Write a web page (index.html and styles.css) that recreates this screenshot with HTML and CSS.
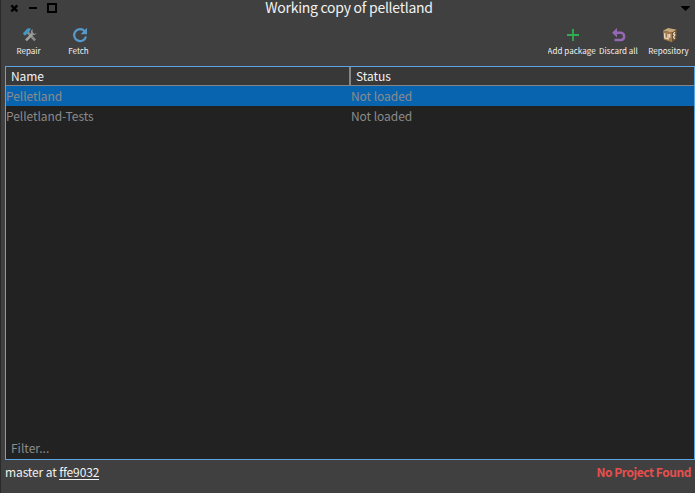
FILE: index.html
```html
<!DOCTYPE html>
<html lang="en">
<head>
<meta charset="utf-8">
<title>Working copy of pelletland</title>
<link rel="stylesheet" href="styles.css">
</head>
<body>
<div class="window">
  <header class="titlebar">
    <div class="controls">
      <svg width="9" height="9" viewBox="0 0 9 9"><path d="M1.3 1.3l6 6M7.3 1.3l-6 6" stroke="#000" stroke-width="2.4"/></svg>
      <svg width="8" height="9" viewBox="0 0 8 9"><path d="M0 4h8" stroke="#000" stroke-width="2"/></svg>
      <svg width="10" height="10" viewBox="0 0 10 10"><path d="M1 1h8v8H1z" fill="none" stroke="#000" stroke-width="2"/></svg>
    </div>
    <h1 class="title">Working copy of pelletland</h1>
    <svg class="menu" width="9" height="5" viewBox="0 0 9 5"><path d="M0 0h9v.8L4.5 5 0 .8z"/></svg>
  </header>
  <nav class="toolbar">
    <div class="group start">
      <button class="tool">
        <svg width="16" height="16" viewBox="0 0 16 16"><path d="M5.5 5.2l7.6 8.2" stroke="#8a8a8a" stroke-width="2.6"/><path d="M4 13.4l6.5-6.6" stroke="#a2a2a2" stroke-width="2.4"/><path d="M10.8 2.2a3 3 0 1 0 3.8 3.9l-2.2.9-1.9-1.9z" fill="#929292"/><path d="M.8 6.4L5.6 1.2l3.2.2-.8 2.4L3 8.8z" fill="#4298c5"/></svg>
        <span>Repair</span>
      </button>
      <button class="tool">
        <svg width="16" height="16" viewBox="0 0 16 16"><path d="M12.7 4.2A6 6 0 1 0 14 9.5" fill="none" stroke="#5599ca" stroke-width="2.2"/><path d="M15 .8v6.4H8.6z" fill="#5599ca"/></svg>
        <span>Fetch</span>
      </button>
    </div>
    <div class="group">
      <button class="tool wide">
        <svg width="16" height="16" viewBox="0 0 16 16"><path d="M8 2v12M2 8h12" stroke="#30ad50" stroke-width="1.8"/></svg>
        <span>Add package</span>
      </button>
      <button class="tool">
        <svg width="16" height="16" viewBox="0 0 16 16"><path d="M4 5.8h6.3a3.7 3.7 0 0 1 0 7.2H3.5" fill="none" stroke="#9468b2" stroke-width="2.5"/><path d="M1 5.8L6 1v9.6z" fill="#9468b2"/></svg>
        <span>Discard all</span>
      </button>
      <button class="tool repository">
        <svg width="16" height="16" viewBox="0 0 16 16"><path d="M1 3.7L6.2 1l8.5 1.8-4.6 2.6z" fill="#c8a77b"/><path d="M1 3.7l9.1 1.7v9.8L1.8 12.5z" fill="#a57849"/><path d="M10.1 5.4l4.6-2.6-.4 9.2-4.2 3.2z" fill="#775330"/><path d="M2.7 6.3v4.5l3.3 1V7M7.7 7v3.7" fill="none" stroke="#e5d9c9" stroke-width="1.4"/><path d="M12.8 5l-1.3 2 1.4 1-1.4 2 1.2 2" fill="none" stroke="#eee4d5" stroke-width="1.2"/></svg>
        <span>Repository</span>
      </button>
    </div>
  </nav>
  <main class="panel">
    <div class="row head"><div>Name</div><div>Status</div></div>
    <div class="row selected"><div>Pelletland</div><div>Not loaded</div></div>
    <div class="row"><div>Pelletland-Tests</div><div>Not loaded</div></div>
    <div class="filter">Filter...</div>
  </main>
  <footer class="status">
    <div class="commit">master at <span class="link">ffe9032</span></div>
    <div class="error">No Project Found</div>
  </footer>
</div>
</body>
</html>
```
FILE: styles.css
```css
* { box-sizing: border-box; }
body {
  margin: 0;
  background: #404040;
  font: 12px/20px "Noto Sans CJK SC", "Noto Sans", sans-serif;
  color: #f2f2f2;
  overflow: hidden;
}
.window {
  width: 695px;
  height: 493px;
  border-left: 1px solid #292929;
  display: flex;
  flex-direction: column;
}
.titlebar {
  height: 20px;
  display: grid;
  grid-template-columns: 60px 1fr 60px;
  align-items: start;
}
.controls { display: flex; gap: 10px; padding: 4px 0 0 9px; }
.controls svg { flex: none; }
.controls svg:last-child { margin-top: -1px; }
.title {
  margin: 0;
  padding-left: 2px;
  font-size: 14px;
  line-height: 15px;
  letter-spacing: -0.26px;
  font-weight: 400;
  text-align: center;
  white-space: nowrap;
}
.menu { justify-self: end; margin: 6px 5px 0 0; }
.toolbar {
  height: 46px;
  display: flex;
  justify-content: space-between;
  padding: 7px 2px 0 2px;
}
.group { display: flex; }
.tool {
  width: 50px;
  height: 32px;
  padding: 0;
  border: 0;
  background: none;
  color: #f2f2f2;
  font: 8px/15px "Noto Sans CJK SC", sans-serif;
  display: flex;
  flex-direction: column;
  align-items: center;
}
.tool svg { flex: none; margin-left: 1px; }
.tool span { white-space: nowrap; margin-left: 1px; }
.start .tool svg, .repository svg { margin-left: 3px; }
.tool.wide { margin-right: -4px; }
.tool.wide span { width: 48px; overflow: hidden; text-align: left; margin-left: -1px; letter-spacing: 0.05px; }
.panel {
  height: 394px;
  margin-left: 4px;
  border: 1px solid #5da5e2;
  background: #222;
  color: #8b8b8b;
  display: flex;
  flex-direction: column;
}
.row { display: grid; grid-template-columns: 345px 1fr; height: 20px; line-height: 20px; letter-spacing: -0.06px; }
.head {
  height: 19px;
  line-height: 18px;
  background: #383838;
  border-bottom: 1px solid #858585;
  color: #f2f2f2;
}
.head div { padding-left: 5px; }
.head div:first-child { border-right: 2px solid #858585; }
.selected { background: #0964b0; }
.filter { margin-top: auto; padding: 0 5px 1px; }
.status {
  display: flex;
  justify-content: space-between;
  padding: 2px 4px 0 4px;
}
.commit { letter-spacing: -0.12px; }
.link { display: inline-block; line-height: 15px; border-bottom: 1px solid #f2f2f2; }
.error { color: #e64f4f; font-weight: 700; letter-spacing: -0.45px; }
```
